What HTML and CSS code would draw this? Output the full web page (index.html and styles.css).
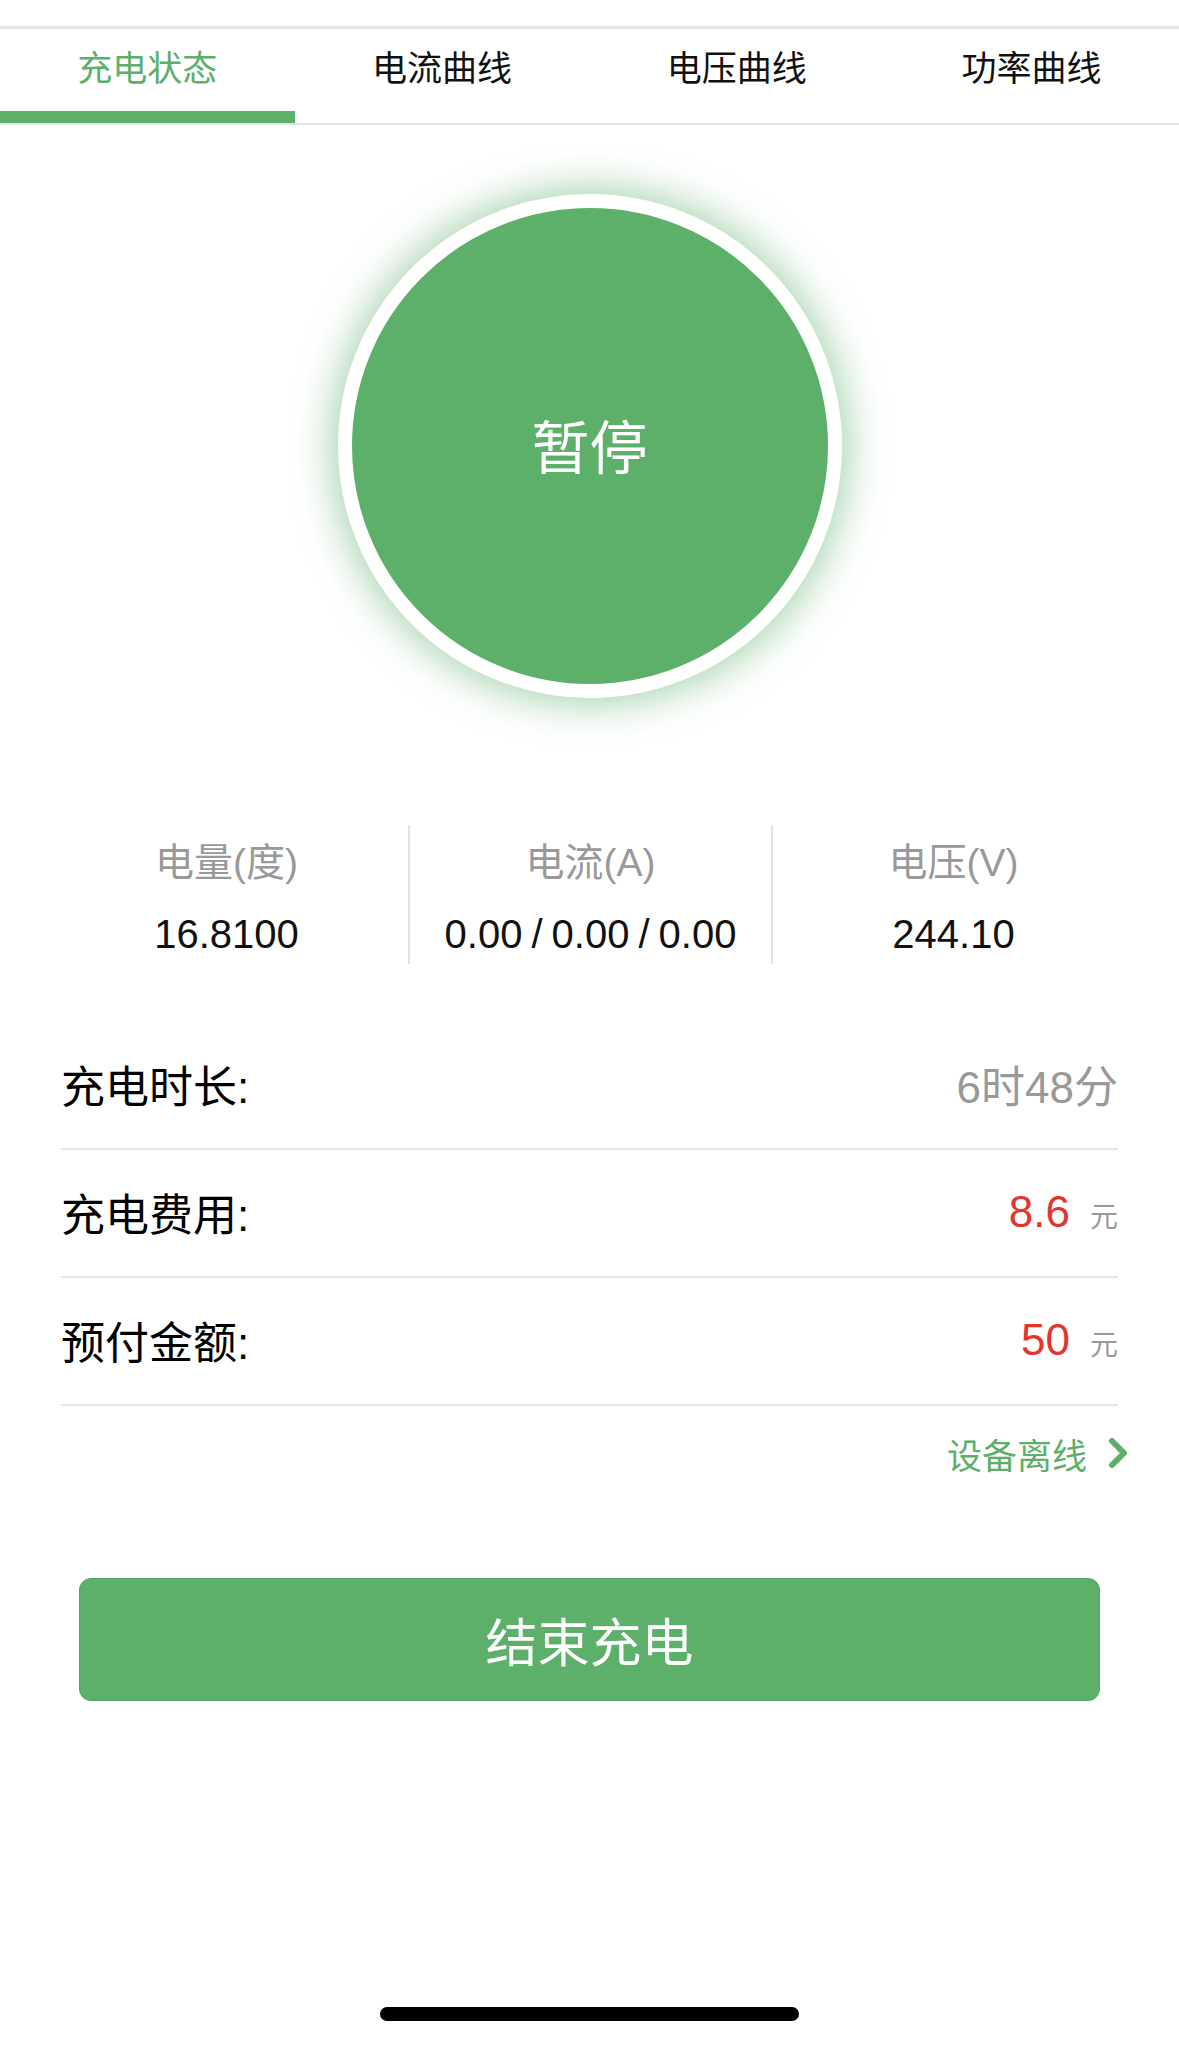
FILE: index.html
```html
<!DOCTYPE html>
<html lang="zh-CN">
<head>
  <meta charset="UTF-8" />
  <meta name="viewport" content="width=device-width, initial-scale=1" />
  <title>充电状态</title>
  <link rel="stylesheet" href="styles.css">
</head>
<body>
  <div class="status-space"></div>

  <!-- Tabs -->
  <div class="tabs">
    <div class="tab active">充电状态</div>
    <div class="tab">电流曲线</div>
    <div class="tab">电压曲线</div>
    <div class="tab">功率曲线</div>
  </div>

  <!-- Big pause button -->
  <div class="circle-wrap">
    <div class="circle">暂停</div>
  </div>

  <!-- Readings -->
  <div class="stats">
    <div class="stat">
      <div class="stat-label">电量(度)</div>
      <div class="stat-value">16.8100</div>
    </div>
    <div class="stat">
      <div class="stat-label">电流(A)</div>
      <div class="stat-value">0.00<span class="sep">/</span>0.00<span class="sep">/</span>0.00</div>
    </div>
    <div class="stat">
      <div class="stat-label">电压(V)</div>
      <div class="stat-value">244.10</div>
    </div>
  </div>

  <div class="info-list">
    <div class="info-row">
      <span class="info-label">充电时长:</span>
      <span class="info-value muted">6时48分</span>
    </div>
    <div class="info-row">
      <span class="info-label">充电费用:</span>
      <span class="info-value"><span class="money">8.6</span><span class="unit">元</span></span>
    </div>
    <div class="info-row">
      <span class="info-label">预付金额:</span>
      <span class="info-value"><span class="money">50</span><span class="unit">元</span></span>
    </div>
  </div>

  <div class="offline">
    <span>设备离线</span>
    <svg class="chevron" width="22" height="32" viewBox="0 0 22 32">
      <path d="M5 4 L17 16 L5 28" fill="none" stroke="#5db06a" stroke-width="6" stroke-linecap="round" stroke-linejoin="round"/>
    </svg>
  </div>

  <button class="end-btn">结束充电</button>

  <div class="home-bar"></div>
</body>
</html>
```

FILE: styles.css
```css
* {
  box-sizing: border-box;
  font-family: 'Liberation Sans', 'Noto Sans CJK SC', sans-serif;
}

body {
  margin: 0;
  background: #fff;
  color: #000;
  min-height: 100vh;
}

.status-space {
  height: 26px;
}

/* Tabs */
.tabs {
  display: grid;
  grid-template-columns: repeat(4, 1fr);
  border-top: 3px solid #e5e5e5;
  border-bottom: 2px solid #e5e5e5;
}

.tab {
  height: 94px;
  display: flex;
  align-items: center;
  justify-content: center;
  padding-bottom: 9px;
  font-size: 35px;
  color: #111;
  border-bottom: 12px solid transparent;
}

.tab.active {
  color: #5db06a;
  border-bottom-color: #5db06a;
}

/* Circle */
.circle-wrap {
  display: flex;
  justify-content: center;
  padding-top: 69px;
}

.circle {
  width: 504px;
  height: 504px;
  border-radius: 50%;
  background: #5db06a;
  border: 14px solid #fff;
  box-shadow: 0 0 36px 8px rgba(93, 176, 106, 0.5);
  display: flex;
  align-items: center;
  justify-content: center;
  color: #fff;
  font-size: 58px;
  padding-bottom: 4px;
}

/* Stats */
.stats {
  display: grid;
  grid-template-columns: repeat(3, 1fr);
  padding: 0 45px;
  margin-top: 127px;
}

.stat {
  height: 139px;
  padding-top: 13px;
  text-align: center;
}

.stat + .stat {
  border-left: 2px solid #e3e3e3;
}

.stat-label {
  font-size: 39px;
  line-height: 50px;
  color: #999;
}

.stat-value {
  font-size: 40px;
  line-height: 50px;
  margin-top: 21px;
  color: #111;
}

.sep {
  margin: 0 9px;
}

/* Info rows */
.info-list {
  margin: 58px 61px 0;
}

.info-row {
  height: 128px;
  display: flex;
  align-items: center;
  justify-content: space-between;
  border-bottom: 2px solid #e5e5e5;
  padding-bottom: 2px;
}

.info-label {
  font-size: 44px;
}

.info-value {
  font-size: 44px;
  display: flex;
  align-items: baseline;
}

.muted {
  color: #999;
}

.money {
  color: #e2362c;
}

.unit {
  font-size: 28px;
  color: #999;
  margin-left: 20px;
}

.offline {
  display: flex;
  justify-content: flex-end;
  align-items: center;
  gap: 20px;
  margin: 23px 50px 0 0;
  height: 48px;
  font-size: 35px;
  color: #5db06a;
}

.chevron {
  display: block;
}

.end-btn {
  display: flex;
  align-items: center;
  justify-content: center;
  width: calc(100% - 158px);
  height: 123px;
  margin: 101px 79px 0;
  border: 1px solid #53a460;
  border-radius: 12px;
  background: #5db06a;
  color: #fff;
  font-size: 52px;
  padding: 0;
}

/* iOS home indicator */
.home-bar {
  position: fixed;
  left: 380px;
  bottom: 25px;
  width: 419px;
  height: 14px;
  border-radius: 7px;
  background: #000;
}
```
